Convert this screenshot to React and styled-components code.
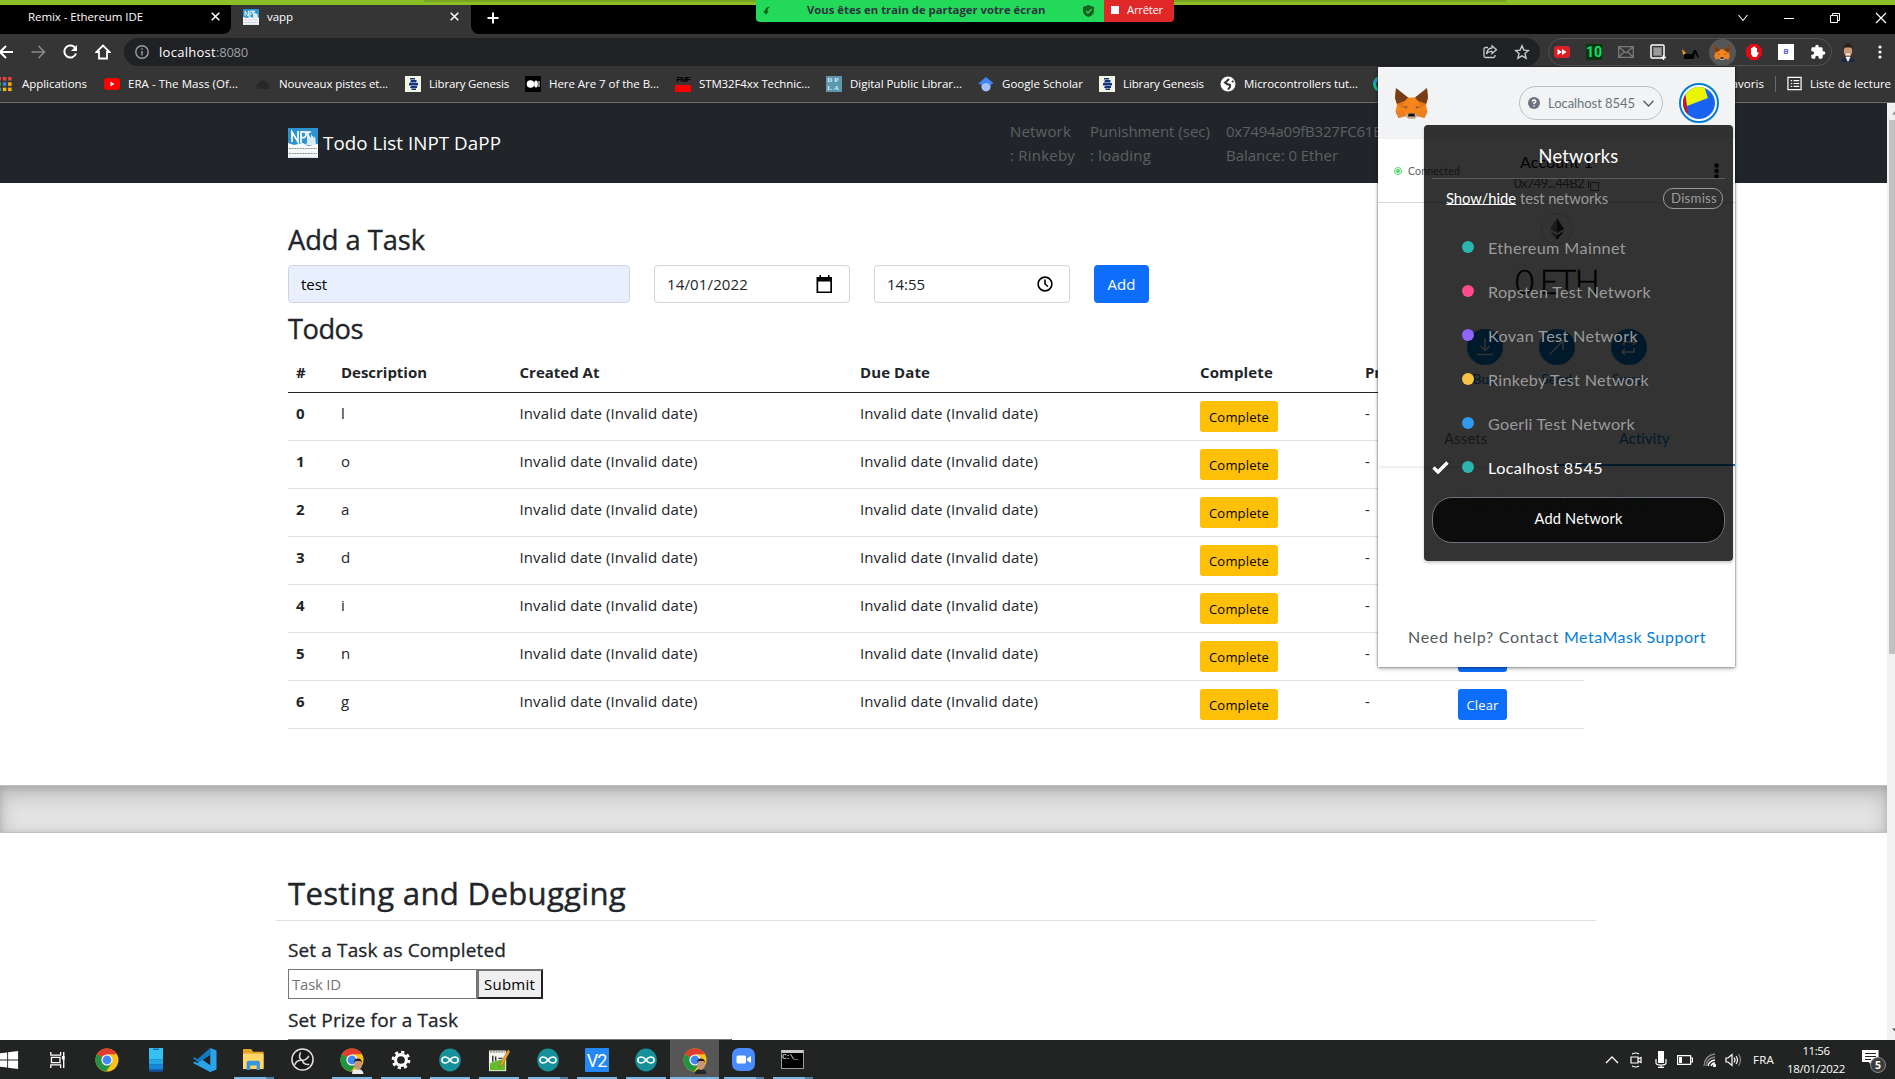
import React, { useLayoutEffect, useRef } from "react";
import styled, { createGlobalStyle } from "styled-components";

const GlobalStyle = createGlobalStyle`
  * { box-sizing: border-box; }
  html, body { margin: 0; padding: 0; overflow: hidden; background: #fff; }
  body { font-family: "Open Sans", "Noto Sans", sans-serif; color: #212529; }
  svg { display: block; flex: none; }
`;

/* ---------- text that keeps a given measure ---------- */
const FitSpan = styled.span`
  display: inline-block;
  white-space: pre;
`;
function Fit({ w, children }) {
  const ref = useRef(null);
  useLayoutEffect(() => {
    const el = ref.current;
    el.style.letterSpacing = "0px";
    const natural = el.getBoundingClientRect().width;
    el.style.letterSpacing = `${(w - natural) / el.textContent.length}px`;
  }, [w, children]);
  return <FitSpan ref={ref}>{children}</FitSpan>;
}

const Screen = styled.div`
  position: relative;
  width: 1895px;
  height: 1079px;
  overflow: hidden;
  display: flex;
  flex-direction: column;
`;

/* ---------- browser chrome ---------- */
const GreenEdge = styled.div`
  flex: none;
  height: 5px;
  background: #8cbf26;
`;
const TabStrip = styled.div`
  flex: none;
  height: 29px;
  display: flex;
  background: #000;
  color: #fff;
  font-size: 11.5px;
`;
const Tab = styled.div`
  width: ${(p) => p.$w}px;
  height: 29px;
  padding: 0 ${(p) => p.$pr}px 6px ${(p) => p.$pl}px;
  display: flex;
  align-items: center;
  gap: 8px;
  background: ${(p) => (p.$active ? "#353535" : "#000")};
  border-radius: ${(p) => (p.$active ? "0" : "0 0 8px 0")};
  & > :last-child { margin-left: auto; }
`;
const TabBacking = styled.div`
  display: flex;
  flex: ${(p) => (p.$grow ? 1 : "none")};
  background: #353535;
`;
const StripRest = styled.div`
  flex: 1;
  display: flex;
  align-items: center;
  justify-content: space-between;
  padding: 0 6px 4px 15px;
  background: #000;
  border-radius: 0 0 0 8px;
`;
const WindowButtons = styled.div`
  display: flex;
  gap: 30px;
  align-items: center;
`;
const Toolbar = styled.div`
  flex: none;
  height: 34px;
  padding: 4px 0 2px 0;
  display: flex;
  align-items: center;
  background: #353535;
`;
const NavButtons = styled.div`
  width: 124px;
  flex: none;
  display: flex;
  gap: 16.5px;
  margin-left: -3px;
  margin-right: 3px;
`;
const Omnibox = styled.div`
  width: 1416px;
  flex: none;
  height: 28px;
  padding: 0 10px;
  display: flex;
  align-items: center;
  gap: 9px;
  border-radius: 14px;
  background: #202124;
  color: #fff;
  font-size: 13px;
`;
const Dim = styled.span`
  color: #9aa0a6;
`;
const OmniActions = styled.div`
  margin-left: auto;
  display: flex;
  gap: 16px;
`;
const Extensions = styled.div`
  width: 284px;
  flex: none;
  height: 28px;
  margin-left: 8px;
  display: flex;
  align-items: center;
  border: 1px solid #505153;
  border-radius: 14px;
  & > :first-child { margin-left: -3px; }
`;
const ExtSlot = styled.div`
  width: 32px;
  height: 27px;
  flex: none;
  display: flex;
  align-items: center;
  justify-content: center;
`;
const ActiveExt = styled.div`
  width: 27px;
  height: 27px;
  flex: none;
  display: grid;
  place-items: center;
  border-radius: 50%;
  background: #555658;
`;
const Digits = styled.div`
  width: 16px;
  height: 16px;
  display: grid;
  place-items: center;
  background: #04350c;
  color: #12e070;
  font: bold 14px/16px "Roboto", sans-serif;
`;
const LetterBox = styled.div`
  width: 16px;
  height: 16px;
  background: #fff;
  color: #5560d8;
  text-align: center;
  font: bold 8px/16px "Roboto", sans-serif;
`;
const Bookmarks = styled.div`
  flex: none;
  height: 35px;
  margin-left: -4px;
  padding: 0 4px 4px 0;
  display: flex;
  align-items: center;
  background: #353535;
  color: #fff;
  font-size: 11.5px;
`;
const Bookmark = styled.div`
  width: ${(p) => p.$w}px;
  flex: none;
  display: flex;
  align-items: center;
  gap: ${(p) => p.$gap || 8}px;
`;
const BookmarkEnd = styled.div`
  margin-left: auto;
  display: flex;
  align-items: center;
`;
const Divider = styled.div`
  width: 1px;
  height: 16px;
  margin: 0 11px 0 11px;
  background: #6a6a6a;
`;
const ChromeLine = styled.div`
  flex: none;
  height: 1px;
  margin-top: -1px;
  background: #6b6c6e;
  position: relative;
`;
const TileIcon = styled.div`
  width: 16px;
  height: 16px;
  display: grid;
  place-items: center;
  overflow: hidden;
  background: ${(p) => p.$bg};
  color: ${(p) => p.$fg};
  font: ${(p) => p.$font || 'bold 7px/8px "Liberation Serif", serif'};
  letter-spacing: ${(p) => p.$ls || 0}px;
  text-align: center;
  white-space: pre;
`;

/* ---------- web page ---------- */
const Viewport = styled.div`
  flex: none;
  height: 937px;
  display: flex;
`;
const Page = styled.div`
  width: 1887px;
  height: 937px;
  overflow: hidden;
  background: #fff;
  font-size: 15px;
`;
const Scrollbar = styled.div`
  width: 8px;
  display: flex;
  flex-direction: column;
  justify-content: space-between;
  background: #f1f1f1;
  overflow: hidden;
`;
const Thumb = styled.div`
  height: 534px;
  margin: -4px 0 auto 2px;
  background: #c1c1c1;
`;
const Navbar = styled.header`
  height: 80px;
  padding: 0 288px;
  display: flex;
  align-items: center;
  background: #212529;
  color: #fff;
`;
const Brand = styled.div`
  width: 722px;
  display: flex;
  align-items: center;
  gap: 5px;
  font-size: 18.8px;
`;
const NavInfo = styled.div`
  width: ${(p) => p.$w}px;
  flex: none;
  color: #5d6063;
  line-height: 24px;
`;
const Container = styled.main`
  height: 602px;
  padding: 40px 303px 0 288px;
`;
const H3 = styled.h3`
  margin: 0;
  height: ${(p) => p.$h}px;
  font-size: 27.3px;
  font-weight: 500;
  line-height: 33px;
  -webkit-text-stroke: 0.35px currentColor;
`;
const FormRow = styled.div`
  display: flex;
  gap: 24px;
  height: 47px;
`;
const Field = styled.div`
  width: ${(p) => p.$w}px;
  height: 38px;
  padding: 0 16px 0 12px;
  display: flex;
  align-items: center;
  justify-content: space-between;
  border: 1px solid #ced4da;
  border-radius: 4px;
  background: ${(p) => (p.$filled ? "#e8f0fe" : "#fff")};
  color: ${(p) => (p.$filled ? "#000" : "#212529")};
`;
const Button = styled.button`
  width: ${(p) => p.$w}px;
  height: ${(p) => (p.$small ? 31 : 38)}px;
  padding: 0;
  border: 0;
  border-radius: ${(p) => (p.$small ? 3 : 4)}px;
  background: ${(p) => (p.$warning ? "#ffc107" : "#0d6efd")};
  color: ${(p) => (p.$warning ? "#000" : "#fff")};
  font-family: inherit;
  font-size: ${(p) => (p.$small ? 13 : 15)}px;
`;
const Row = styled.div`
  display: grid;
  grid-template-columns: 45px 178.5px 340.5px 340px 165px 93px 1fr;
  height: ${(p) => (p.$head ? 41 : 48)}px;
  line-height: 24px;
  border-bottom: 1px solid ${(p) => (p.$head ? "#212529" : "#dee2e6")};
  font-weight: ${(p) => (p.$head ? 700 : 400)};
`;
const Cell = styled.div`
  padding: 8px 0 0 8px;
  font-weight: ${(p) => (p.$bold ? 700 : "inherit")};
`;
const Band = styled.div`
  height: 48px;
  border: solid rgba(0, 0, 0, 0.15);
  border-width: 1px 0;
  background: #e3e3e3;
  box-shadow: inset 0 8px 20px rgba(0, 0, 0, 0.2), inset 0 2px 7px rgba(0, 0, 0, 0.13);
`;
const Debug = styled.section`
  padding: 40px 291px 0 276px;
`;
const H2 = styled.h2`
  margin: 0 0 17px;
  height: 48px;
  padding-left: 12px;
  border-bottom: 1px solid #dee2e6;
  font-size: 31.2px;
  font-weight: 500;
  line-height: 40px;
  -webkit-text-stroke: 0.4px currentColor;
`;
const H5 = styled.h5`
  margin: 0 0 ${(p) => p.$mb}px;
  padding-left: 12px;
  height: 24px;
  font-size: 19px;
  font-weight: 500;
  line-height: 24px;
  -webkit-text-stroke: 0.3px currentColor;
`;
const PlainForm = styled.div`
  display: flex;
  margin: 0 0 9px 12px;
`;
const PlainInput = styled.div`
  width: 189px;
  height: 30px;
  padding: 2px 3px;
  border: 1px solid #767676;
  color: #757575;
  line-height: 24px;
`;
const PlainButton = styled.div`
  width: 66px;
  height: 30px;
  border: 2px solid;
  border-color: #767676 #212121 #212121 #767676;
  background: #efefef;
  color: #000;
  line-height: 26px;
  padding-left: 5px;
`;

/* ---------- wallet popup ---------- */
const Popup = styled.aside`
  position: absolute;
  left: 1378px;
  top: 67px;
  width: 357px;
  height: 600px;
  background: #fff;
  box-shadow: 0 0 2px rgba(0, 0, 0, 0.6), 0 2px 4px rgba(0, 0, 0, 0.25);
  font-family: "Lato", "Inter", sans-serif;
  display: flex;
  flex-direction: column;
`;
const PopHeader = styled.div`
  height: 72px;
  padding: 0 16px 0 17px;
  display: flex;
  align-items: center;
  background: #f2f3f4;
`;
const NetPill = styled.div`
  width: 144px;
  height: 34px;
  margin: 0 16px 0 auto;
  padding: 0 8px;
  display: flex;
  align-items: center;
  gap: 8px;
  border: 1px solid #bbc0c5;
  border-radius: 17px;
  color: #6a737d;
  font-size: 13px;
`;
const AccountBar = styled.div`
  height: 64px;
  padding: 0 16px 0 16px;
  display: grid;
  grid-template-columns: 110px 1fr 110px;
  align-items: center;
  border-bottom: 1px solid #d6d9dc;
  color: #5b6167;
  font-size: 10.5px;
`;
const Connected = styled.div`
  display: flex;
  align-items: center;
  gap: 6px;
`;
const Account = styled.div`
  text-align: center;
  font-size: 13px;
  line-height: 18px;
  white-space: nowrap;
`;
const AccountName = styled.div`
  color: #000;
  font-size: 16px;
  line-height: 25px;
`;
const AccountAddress = styled.div`
  display: flex;
  align-items: center;
  justify-content: center;
  gap: 4px;
  & > svg { margin-top: 4px; }
`;
const MoreButton = styled.div`
  justify-self: end;
`;
const Overview = styled.div`
  height: 263px;
  padding-top: 10px;
  display: flex;
  flex-direction: column;
  align-items: center;
  box-shadow: 0 2px 3px rgba(0, 0, 0, 0.08);
`;
const Token = styled.div`
  width: 32px;
  height: 32px;
  flex: none;
  display: grid;
  place-items: center;
  border: 1px solid #d6d9dc;
  border-radius: 50%;
`;
const Amount = styled.div`
  height: 84px;
  flex: none;
  padding-top: 17px;
  color: #000;
  font-size: 33px;
  font-weight: 300;
  line-height: 38px;
  -webkit-text-stroke: 0.4px currentColor;
`;
const Actions = styled.div`
  display: flex;
  flex: none;
  gap: 12px;
  height: 76px;
`;
const Action = styled.div`
  width: 60px;
  display: flex;
  flex-direction: column;
  align-items: center;
  gap: 5px;
  color: #037dd6;
  font-size: 14px;
`;
const ActionIcon = styled.div`
  width: 36px;
  height: 36px;
  display: grid;
  place-items: center;
  border-radius: 50%;
  background: #037dd6;
`;
const Tabs = styled.div`
  width: 100%;
  height: 61px;
  display: flex;
`;
const PopTab = styled.div`
  flex: 1;
  padding: 25px 3px 0 0;
  text-align: center;
  font-size: 14.5px;
  line-height: 18px;
  color: ${(p) => (p.$on ? "#037dd6" : "#6a737d")};
  border-bottom: ${(p) => (p.$on ? "2px solid #037dd6" : "0")};
`;
const Empty = styled.div`
  padding-top: 23px;
  text-align: center;
  font-size: 15px;
  line-height: 22px;
  color: #c2c6ca;
`;
const Help = styled.div`
  margin-top: auto;
  height: 41px;
  padding-left: 30px;
  font-size: 16px;
  line-height: 22px;
  color: #535a61;
  white-space: nowrap;
`;
const Link = styled.span`
  color: #037dd6;
`;
const Dropdown = styled.div`
  position: absolute;
  left: 46px;
  top: 58px;
  width: 309px;
  height: 436px;
  padding: 0 8px;
  border-radius: 4px;
  background: rgba(0, 0, 0, 0.8);
  box-shadow: 0 2px 3px rgba(0, 0, 0, 0.2);
  color: #fff;
`;
const DropTitle = styled.div`
  height: 54px;
  padding-top: 19px;
  border-bottom: 1px solid #5b5b5b;
  text-align: center;
  font-size: 18.3px;
  line-height: 24px;
`;
const DropHint = styled.div`
  height: 46px;
  padding: 8px 2px 0 14px;
  display: flex;
  align-items: flex-start;
  justify-content: space-between;
  color: #9b9b9b;
  font-size: 14.8px;
  line-height: 22px;
`;
const ShowHide = styled.span`
  display: inline-block;
  height: 18px;
  margin-right: 4px;
  border-bottom: 1px solid #fff;
  color: #fff;
`;
const Dismiss = styled.div`
  width: 60px;
  height: 21px;
  margin-top: 1px;
  padding-left: 7px;
  border: 1px solid #9b9b9b;
  border-radius: 10px;
  font-size: 13.2px;
  line-height: 19px;
`;
const NetItem = styled.div`
  height: 44px;
  display: flex;
  align-items: center;
  color: ${(p) => (p.$on ? "#fff" : "#9b9b9b")};
  font-size: 16.2px;
`;
const Check = styled.div`
  width: 30px;
`;
const Dot = styled.div`
  width: 12px;
  height: 12px;
  margin-right: 14px;
  border-radius: 50%;
  background: ${(p) => p.$c};
`;
const AddNetwork = styled.div`
  width: 293px;
  height: 46px;
  margin-top: 8px;
  border: 1px solid #6a737d;
  border-radius: 20px;
  background: rgba(0, 0, 0, 0.75);
  text-align: center;
  font-size: 14.6px;
  line-height: 41px;
`;

/* ---------- screen share banner ---------- */
const ShareShade = styled.div`
  position: absolute;
  left: 424px;
  top: 0;
  width: 1082px;
  height: 2px;
  background: rgba(0, 0, 0, 0.14);
`;
const ShareBar = styled.div`
  position: absolute;
  left: 756px;
  top: 0;
  height: 22px;
  display: flex;
  border-radius: 0 0 4px 4px;
  overflow: hidden;
  font-size: 11.3px;
  font-weight: 700;
  line-height: 20px;
`;
const Sharing = styled.div`
  width: 348px;
  padding: 0 10px 0 7px;
  display: grid;
  grid-template-columns: 44px 236px 1fr;
  align-items: center;
  background: #23d959;
  color: #2c3440;
  & > span { margin-top: -2px; }
  & > :last-child { justify-self: end; }
`;
const Stop = styled.div`
  width: 70px;
  padding: 0 0 3px 7px;
  display: flex;
  align-items: center;
  gap: 8px;
  background: #e02828;
  color: #fff;
  font-weight: 400;
`;
const StopSquare = styled.div`
  width: 8px;
  height: 8px;
  background: #fff;
`;

/* ---------- taskbar ---------- */
const Taskbar = styled.footer`
  flex: none;
  height: 39px;
  padding-right: 9px;
  display: flex;
  justify-content: space-between;
  background: #222423;
  color: #fff;
`;
const Apps = styled.div`
  display: flex;
  margin-left: -16px;
`;
const AppSlot = styled.div`
  width: 49px;
  height: 39px;
  padding-top: 3px;
  display: flex;
  flex-direction: column;
  align-items: center;
  justify-content: space-between;
  background: ${(p) => (p.$active ? "#555655" : "transparent")};
`;
const IconBox = styled.div`
  height: 33px;
  display: grid;
  place-items: center;
`;
const Run = styled.div`
  width: ${(p) => (p.$active ? 49 : 40)}px;
  height: 2px;
  background: ${(p) => (p.$run ? "#76b9ed" : "transparent")};
  border-right: ${(p) => (p.$run === 2 ? "8px solid #4f7ea3" : "0")};
`;
const VncTile = styled.div`
  width: 24px;
  height: 24px;
  background: #2489f5;
  border-radius: 1px;
  color: #fff;
  text-align: center;
  font: 18px/25px "Roboto", sans-serif;
  letter-spacing: -1px;
`;
const Console = styled.div`
  width: 23px;
  height: 19px;
  border: 1px solid #9a9a9a;
  border-top: 3px solid #c9c9c9;
  background: #000;
  color: #fff;
  font: 8px/8px "Liberation Mono", monospace;
  letter-spacing: -1px;
`;
const Tray = styled.div`
  display: flex;
  align-items: center;
  font-size: 11.5px;
`;
const TrayIcon = styled.div`
  width: 24.4px;
  display: grid;
  place-items: center;
`;
const Lang = styled.div`
  margin-left: 7px;
  width: 34px;
`;
const Clock = styled.div`
  width: 58px;
  margin-right: 17px;
  text-align: center;
  line-height: 18px;
`;
const Notify = styled.div`
  position: relative;
  width: 24px;
  height: 24px;
`;
const Badge = styled.div`
  position: absolute;
  left: 8px;
  top: 9px;
  width: 16px;
  height: 16px;
  border: 1px solid #8b8b8b;
  border-radius: 50%;
  background: #3b3c3b;
  text-align: center;
  font-size: 10.5px;
  font-weight: 700;
  line-height: 14px;
`;

/* ---------- drawings ---------- */
const Line = ({ s = 16, c = "#fff", w = 1.5, vb = "0 0 16 16", h, children }) => (
  <svg width={s} height={h || s} viewBox={vb} fill="none" stroke={c} strokeWidth={w}>
    {children}
  </svg>
);
const Fox = ({ w = 33, h = 31 }) => (
  <svg width={w} height={h} viewBox="0 0 33 31" preserveAspectRatio="none">
    <path d="M1 1 13 9.5h7L32 1l1 9-2 7 1.500 6.500L29.500 30l-7-2-3 2.500h-6L10.500 28l-7 2L.5 23.500 2 17 0 10z" fill="#f6851b" />
    <path d="M1 0 13 9.500 10 13 2 16 0 10zM32 0 20 9.500 23 13l8 3 2-6z" fill="#763d16" />
    <path d="M2 16l8-3-2.500 7zM31 16l-8-3 2.500 7z" fill="#e4761b" />
    <path d="M7.500 19l5-1.500-.5 3.500zM25.500 19l-5-1.500.5 3.500z" fill="#a5623c" />
    <path d="M.5 23.500 8 22l3 6-7.500 2zM32.500 23.500 25 22l-3 6 7.500 2z" fill="#e97f24" />
    <path d="M10.500 28l3-3h6l3 3-3 2.800h-6z" fill="#c0ad9e" />
    <path d="M13.500 25.500h6l.5 3h-7z" fill="#161616" />
  </svg>
);
const Inpt = ({ s }) => (
  <svg width={s} height={s} viewBox="0 0 30 30">
    <rect width="30" height="30" fill="#f4f9fc" />
    <rect width="30" height="18" fill="#2c93cf" />
    <path d="M4 14V4l6 10V3M13 15V4q6-1 5 3t-5 2M17 4h6M20 4v11" stroke="#fff" strokeWidth="1.700" fill="none" />
    <path d="M21 7l2 3v-4l3 4 1-2 1 9H18z" fill="#d9edf7" />
    <path d="M0 15l6 2 9-2 5 3 10-2v4H0z" fill="#fff" />
    <path d="M1 20.500h28M1 25.500h28" stroke="#8f9499" strokeWidth="1" strokeDasharray="2 .7" />
    <path d="M1 29.300h28" stroke="#c5dbe8" />
  </svg>
);
const Chrome = ({ face }) => (
  <svg width="24" height="28" viewBox="0 0 24 28">
    <circle cx="12" cy="14" r="11.500" fill="#fbc116" />
    <path d="M12 14 2 8.200A11.500 11.500 0 0 1 22 8.300H12z" fill="#e33b2e" />
    <path d="M2 8.200A11.500 11.500 0 0 0 11 25.400L17 17l-5-3z" fill="#229342" />
    <circle cx="12" cy="14" r="5.600" fill="#fff" />
    <circle cx="12" cy="14" r="4.400" fill="#4285f4" />
    {face && (
      <g>
        <path d="M12 28q0-5 5.500-5t6 5z" fill={face === 1 ? "#eee" : "#24262c"} />
        <ellipse cx="18" cy="19" rx="3.800" ry="5" fill="#c99577" />
        <path d="M14 17q0-4.500 4-4.500t4 4.500l-1.500-2h-5z" fill="#241a16" />
      </g>
    )}
  </svg>
);
const Arduino = () => (
  <svg width="22" height="24" viewBox="0 0 23 28" preserveAspectRatio="none">
    <ellipse cx="11.500" cy="14" rx="11.300" ry="13.300" fill="#179199" />
    <path d="M11.500 14c-2-3-3.500-3.500-5-3.500a3.500 3.500 0 0 0 0 7c1.500 0 3-.5 5-3.500s3.500-3.500 5-3.500a3.500 3.500 0 0 1 0 7c-1.500 0-3-.5-5-3.500z" fill="none" stroke="#fff" strokeWidth="1.700" />
  </svg>
);
const LibGen = () => (
  <svg width="16" height="16" viewBox="0 0 16 16">
    <rect width="16" height="16" fill="#f3f3e2" />
    <path d="M5 2h5v1.500H5zM6 4h5.500v2.500H5zM4 7h9v2.500H4zM6 10h6v2H5zM6 12.500h5V14H7z" fill="#15357f" />
  </svg>
);
const Cal = () => (
  <svg width="17" height="19" viewBox="0 0 17 19">
    <path d="M3.500 0h1.500v2h7V0h1.500v2H16v16H.5V2h3zM2.200 6.500v10h12.100v-10z" fill="#000" fillRule="evenodd" />
  </svg>
);
const Close = () => <Line s={9} vb="0 0 9 9"><path d="M.7.7l7.600 7.600M8.300.7.7 8.300" /></Line>;

const bookmarks = [
  [108, "Applications", 65, (
    <svg width="16" height="16" viewBox="0 0 16 16">
      {["#e8453c", "#e8453c", "#e8453c", "#30a552", "#3f80f0", "#f9b10d", "#30a552", "#f9b10d", "#f9b10d"].map((c, i) => (
        <rect key={i} x={1.5 + (i % 3) * 5.3} y={1 + Math.floor(i / 3) * 5.3} width="3.500" height="3.500" fill={c} />
      ))}
    </svg>
  ), 10],
  [151, "ERA - The Mass (Of...", 110, (
    <svg width="16" height="16" viewBox="0 0 16 16"><rect y="2" width="16" height="12" rx="3" fill="#f00" /><path d="M6.500 5.500v5l4-2.500z" fill="#fff" /></svg>
  )],
  [150, "Nouveaux pistes et...", 109, (
    <svg width="16" height="16" viewBox="0 0 16 16"><path d="M3 13a3 3 0 0 1 0-5 5 5 0 0 1 9-1 3.500 3.500 0 0 1 1 6z" fill="#282828" /></svg>
  )],
  [120, "Library Genesis", 80, <LibGen />],
  [150, "Here Are 7 of the B...", 110, (
    <svg width="16" height="16" viewBox="0 0 16 16"><rect width="16" height="16" fill="#000" /><circle cx="5.500" cy="8" r="3.800" fill="#fff" /><ellipse cx="11" cy="8" rx="1.800" ry="3.600" fill="#fff" /><rect x="13.500" y="5" width="1" height="6" fill="#fff" /></svg>
  )],
  [151, "STM32F4xx Technic...", 111, <TileIcon $bg="linear-gradient(#3a3535 56%, #f00 56%)" $fg="#000" $font='bold 8px/8px "Liberation Sans", sans-serif' $ls={-1}>{"FMF\n "}</TileIcon>],
  [152, "Digital Public Librar...", 112, <TileIcon $bg="#5c98b0" $fg="#d9edf3" $ls={2}>{"DP\nLA"}</TileIcon>],
  [121, "Google Scholar", 81, (
    <svg width="16" height="16" viewBox="0 0 16 16"><circle cx="8" cy="10.800" r="4.600" fill="#a0c3ff" /><path d="M8 1 .5 7.200 3.500 9q4.500-4 9 0l3-1.800z" fill="#4285f4" /></svg>
  )],
  [121, "Library Genesis", 81, <LibGen />],
  [153, "Microcontrollers tut...", 114, (
    <svg width="16" height="16" viewBox="0 0 16 16"><circle cx="8" cy="8" r="7.500" fill="#fff" /><path d="M9 3 7 5 5 6.500 7 8l3 1v2l-2 2.500M12 5l1.500 1" stroke="#333" strokeWidth="2" fill="none" /></svg>
  )],
  [20, "", 0, (
    <svg width="16" height="16" viewBox="0 0 16 16"><circle cx="8" cy="8" r="6.500" fill="none" stroke="#00c28c" strokeWidth="3" /><path d="M2 7a6 6 0 0 1 6-5" fill="none" stroke="#2f8ae0" strokeWidth="3" /></svg>
  )],
];

const networks = [
  ["Ethereum Mainnet", 138, "#29b6af"],
  ["Ropsten Test Network", 163, "#ff4a8d"],
  ["Kovan Test Network", 150, "#9064ff"],
  ["Rinkeby Test Network", 161, "#f6c343"],
  ["Goerli Test Network", 147, "#3099f2"],
  ["Localhost 8545", 115, "#29b6af"],
];

const Gear = () => (
  <svg width="20" height="22" viewBox="0 0 22 22">
    <circle cx="11" cy="11" r="6" fill="none" stroke="#fff" strokeWidth="3.500" />
    <circle cx="11" cy="11" r="8.800" fill="none" stroke="#fff" strokeWidth="3" strokeDasharray="3.450 3.450" />
  </svg>
);

const taskApps = [
  [<svg width="20" height="18" viewBox="0 0 22 22" preserveAspectRatio="none"><path d="M0 3l9-1.300v8.800H0zM10 1.600 21 0v10.500H10zM0 11.500h9v8.800L0 19zM10 11.500h11V22l-11-1.600z" fill="#fff" /></svg>],
  [<Line s={17} h={16} vb="0 0 17 18"><path d="M1 0v3.500h11V0M1 18v-3.500h11V18M1.700 6h9.600v6H1.700zM15.500 0v18" /><path d="M13.500 6.500h3" strokeWidth="4" /></Line>],
  [<Chrome />],
  [<svg width="14" height="24" viewBox="0 0 14 29" preserveAspectRatio="none"><rect width="14" height="29" rx="1" fill="#124c8f" /><rect width="14" height="14" fill="#35c1f1" /><rect y="14" width="14" height="6" fill="#23a5e6" /><rect y="20" width="14" height="6" fill="#1486d8" /><path d="M4 1.500h6" stroke="#0b4b7c" /></svg>],
  [<svg width="24" height="24" viewBox="0 0 25 28" preserveAspectRatio="none"><path d="M18 0 4.500 13 1.500 10.500 0 12l17.500 16H18z" fill="#0e7cc5" /><path d="M18 0l6.500 3v22L18 28 0 17.500 1.500 16l3.500 1.500L18 8z" fill="#2aa3ea" /><path d="M18 8v12l-8-6z" fill="#222423" /></svg>],
  [<svg width="23" height="21" viewBox="0 0 23 23"><path d="M0 0h9l2 3H22.500v18H0z" fill="#e0a526" /><path d="M0 5h22.500v17H0z" fill="#ffd767" /><path d="M4 23v-8q0-2 2-2h10.500q2 0 2 2v8H15v-5H8v5z" fill="#3d93d9" /></svg>, 2],
  [<Line s={23} h={23} vb="0 0 24 24" c="#ddd" w={1.6}><circle cx="12" cy="12" r="11" fill="#17181a" /><path d="M10 4.500q-3 6 2 8.500 5-1 6.500-5M12 13q-6-1-8 4.500M12 13q1 5 7 4" /></Line>],
  [<Chrome face={1} />, 1],
  [<Gear />, 1],
  [<Arduino />, 1],
  [<svg width="22" height="24" viewBox="0 0 23 28" preserveAspectRatio="none"><path d="M1 3h18v24H1z" fill="#f3f5ec" /><path d="M2 18q9-5 16-4v12H2z" fill="#63bb2d" /><path d="M2 4h16" stroke="#999" strokeWidth="3" strokeDasharray="2 1" /><path d="M5 9v7M8 10v5M11 12h4" stroke="#333" strokeWidth="1.500" /><path d="M21 2 13 18l-1 4 3-2 8-16z" fill="#f0a92a" stroke="#935b18" strokeWidth=".6" /></svg>, 1],
  [<Arduino />, 2],
  [<VncTile>V2</VncTile>, 1],
  [<Arduino />, 1],
  [<Chrome face={2} />, 1, true],
  [<svg width="23" height="23" viewBox="0 0 23 23"><rect width="23" height="23" rx="7" fill="#4a8cff" /><rect x="4.500" y="7.500" width="9.500" height="8" rx="1.500" fill="#fff" /><path d="M15 10.500l4-2.500v7l-4-2.500z" fill="#fff" /></svg>, 2],
  [<Console>C:\_</Console>, 2],
];

export default function App() {
  return (
    <Screen>
      <GlobalStyle />
      <GreenEdge />
      <TabStrip>
        <TabBacking>
          <Tab $w={231} $pl={28} $pr={11}>
            <Fit w={115}>Remix - Ethereum IDE</Fit>
            <Close />
          </Tab>
        </TabBacking>
        <Tab $w={240} $pl={12} $pr={12} $active>
          <Inpt s={16} />
          <Fit w={26}>vapp</Fit>
          <Close />
        </Tab>
        <TabBacking $grow>
          <StripRest>
            <Line s={14} w={2} vb="0 0 14 14"><path d="M7 1.500v11M1.500 7h11" /></Line>
            <WindowButtons>
              <Line w={1.1}><path d="M3.500 5 8 10.500 12.500 5" /></Line>
              <Line w={1}><path d="M3 8.500h10" /></Line>
              <Line w={1}><path d="M3.500 5.500h7v7h-7zM5.500 5.500v-2h7v7h-2" /></Line>
              <Line w={1.200}><path d="M3 3l10 10M13 3 3 13" /></Line>
            </WindowButtons>
          </StripRest>
        </TabBacking>
      </TabStrip>
      <Toolbar>
        <NavButtons>
          <Line w={2}><path d="M16 8H3M9 2 3 8l6 6" /></Line>
          <Line w={1.600} c="#87898b"><path d="M1.500 8H14.500M8.500 2l6 6-6 6" /></Line>
          <Line w={2}><path d="M13.500 4.500A6 6 0 1 0 14 9.500" /><path d="M15 1v6H9z" fill="#fff" stroke="none" /></Line>
          <Line w={1.800}><path d="M8 1.500 1.500 8H4v6.500h8V8h2.500z" /></Line>
        </NavButtons>
        <Omnibox>
          <Line c="#9aa0a6" w={1.400}><circle cx="8" cy="8" r="6.200" /><path d="M8 7v4.500M8 4.200v1.500" /></Line>
          <span><Fit w={57}>localhost</Fit><Dim><Fit w={32}>:8080</Fit></Dim></span>
          <OmniActions>
            <Line c="#c8c9ca" w={1.300}><path d="M6 3.500H3.500q-1.500 0-1.500 1.500v7q0 1.500 1.500 1.500h8q1.500 0 1.500-1.500V11M10 1.800 14.500 5.700 10 9.600V7.500Q6.500 7 4.500 10 5 4.500 10 4z" /></Line>
            <Line c="#c8c9ca" w={1.400}><path d="M8 1.800l1.900 4.300 4.600.4L11 9.600l1.100 4.600L8 11.800l-4.100 2.400L5 9.600 1.500 6.500l4.600-.4z" /></Line>
          </OmniActions>
        </Omnibox>
        <Extensions>
          <ExtSlot>
            <svg width="16" height="16" viewBox="0 0 16 16"><rect y="2" width="16" height="12" rx="3" fill="#d92027" /><path d="M3.500 5v6l4.500-3zM8 5v6l4.500-3z" fill="#fff" /></svg>
          </ExtSlot>
          <ExtSlot><Digits>10</Digits></ExtSlot>
          <ExtSlot><Line c="#797979" w={1.300}><path d="M.7 2.700h14.600v10.600H.7zM1 3l7 6 7-6M1 13l5-5M15 13l-5-5" /></Line></ExtSlot>
          <ExtSlot><Line c="#fff" w={1.500}><rect x="1" y="1" width="13" height="13" rx="1" /><rect x="3.500" y="3.500" width="8" height="8" fill="#9a9a9a" stroke="#777" strokeWidth="1" /><path d="M13.500 11v5M11 13.500h5" /></Line></ExtSlot>
          <ExtSlot><svg width="18" height="16" viewBox="0 0 18 16"><path d="M3 10h8l2-4h2l3 7-1 1-3-5-1 6H3z" fill="#050505" /><path d="M1 5l4 4-3 2z" fill="#f59a23" /></svg></ExtSlot>
          <ExtSlot><ActiveExt><Fox w={16} h={15} /></ActiveExt></ExtSlot>
          <ExtSlot>
            <svg width="16" height="16" viewBox="0 0 16 16"><path d="M4.700 0h6.600L16 4.700v6.600L11.300 16H4.700L0 11.300V4.700z" fill="#e00b12" /><path d="M5 8V4h1.500V3H8v-.500h1.500V4H11v5l1-1 .800.800L10.500 13H7L5 10z" fill="#fff" /></svg>
          </ExtSlot>
          <ExtSlot><LetterBox>B</LetterBox></ExtSlot>
          <ExtSlot>
            <svg width="16" height="16" viewBox="0 0 24 24"><path d="M20.500 11H19V7a2 2 0 0 0-2-2h-4V3.500a2.500 2.500 0 0 0-5 0V5H4a2 2 0 0 0-2 2v3.800h1.500a2.700 2.700 0 0 1 0 5.400H2V20a2 2 0 0 0 2 2h3.800v-1.500a2.700 2.700 0 0 1 5.400 0V22H17a2 2 0 0 0 2-2v-4h1.500a2.500 2.500 0 0 0 0-5z" fill="#fff" /></svg>
          </ExtSlot>
        </Extensions>
        <ExtSlot>
          <svg width="16" height="20" viewBox="0 0 16 20"><path d="M1 20q0-5 7-5t7 5z" fill="#1e2b45" /><path d="M5.500 15h5L8 20z" fill="#fff" /><ellipse cx="8" cy="9" rx="4.200" ry="6" fill="#cb997c" /><path d="M3.500 8Q3 1.500 8 1.500T12.500 8L11.500 5.500h-7z" fill="#2b1d18" /><path d="M6 11q2 1.500 4 0v1.500q-2 1-4 0z" fill="#fff" /></svg>
        </ExtSlot>
        <ExtSlot>
          <svg width="4" height="16" viewBox="0 0 4 16" fill="#fff"><circle cx="2" cy="3" r="1.600" /><circle cx="2" cy="8" r="1.600" /><circle cx="2" cy="13" r="1.600" /></svg>
        </ExtSlot>
      </Toolbar>
      <Bookmarks>
        {bookmarks.map(([w, label, tw, icon, gap], i) => (
          <Bookmark key={i} $w={w} $gap={gap}>
            {icon}
            {label && <Fit w={tw}>{label}</Fit>}
          </Bookmark>
        ))}
        <BookmarkEnd>
          <Fit w={75}>Autres favoris</Fit>
          <Divider />
          <Line s={15} w={1.300}><path d="M1 1.500h14v13H1zM4 5h1.500M7 5h6M4 8h1.500M7 8h6M4 11h1.500M7 11h6" /></Line>
          <Bookmark $w={8} />
          <Fit w={81}>Liste de lecture</Fit>
        </BookmarkEnd>
      </Bookmarks>
      <ChromeLine />
      <Viewport>
        <Page>
          <Navbar>
            <Brand><Inpt s={30} /><Fit w={178}>Todo List INPT DaPP</Fit></Brand>
            <NavInfo $w={80}><Fit w={61}>Network</Fit><br /><Fit w={65}>: Rinkeby</Fit></NavInfo>
            <NavInfo $w={136}><Fit w={120}>Punishment (sec)</Fit><br /><Fit w={61}>: loading</Fit></NavInfo>
            <NavInfo $w={160}><Fit w={165}>0x7494a09fB327FC61B8</Fit><br /><Fit w={112}>Balance: 0 Ether</Fit></NavInfo>
          </Navbar>
          <Container>
            <H3 $h={42}><Fit w={137}>Add a Task</Fit></H3>
            <FormRow>
              <Field $w={342} $filled><Fit w={26}>test</Fit></Field>
              <Field $w={196}><Fit w={81}>14/01/2022</Fit><Cal /></Field>
              <Field $w={196}>
                <Fit w={38}>14:55</Fit>
                <Line s={16} c="#000" w={1.600}><circle cx="8" cy="8" r="6.900" /><path d="M8 3.500V8l3 2.500" /></Line>
              </Field>
              <Button $w={55}>Add</Button>
            </FormRow>
            <H3 $h={40}><Fit w={75}>Todos</Fit></H3>
            <Row $head>
              <Cell>#</Cell>
              <Cell><Fit w={86}>Description</Fit></Cell>
              <Cell><Fit w={80}>Created At</Fit></Cell>
              <Cell><Fit w={70}>Due Date</Fit></Cell>
              <Cell><Fit w={73}>Complete</Fit></Cell>
              <Cell><Fit w={36}>Prize</Fit></Cell>
              <Cell><Fit w={38}>Clear</Fit></Cell>
            </Row>
            {["l", "o", "a", "d", "i", "n", "g"].map((ch, i) => (
              <Row key={ch}>
                <Cell $bold>{i}</Cell>
                <Cell>{ch}</Cell>
                <Cell><Fit w={178}>Invalid date (Invalid date)</Fit></Cell>
                <Cell><Fit w={178}>Invalid date (Invalid date)</Fit></Cell>
                <Cell><Button $small $warning $w={78}><Fit w={60}>Complete</Fit></Button></Cell>
                <Cell>-</Cell>
                <Cell><Button $small $w={49}><Fit w={32}>Clear</Fit></Button></Cell>
              </Row>
            ))}
          </Container>
          <Band />
          <Debug>
            <H2><Fit w={338}>Testing and Debugging</Fit></H2>
            <H5 $mb={7}><Fit w={218}>Set a Task as Completed</Fit></H5>
            <PlainForm>
              <PlainInput><Fit w={49}>Task ID</Fit></PlainInput>
              <PlainButton><Fit w={51}>Submit</Fit></PlainButton>
            </PlainForm>
            <H5 $mb={7}><Fit w={170}>Set Prize for a Task</Fit></H5>
            <PlainForm>
              <PlainInput />
              <PlainInput />
              <PlainButton />
            </PlainForm>
          </Debug>
        </Page>
        <Scrollbar>
          <svg width="8" height="21" viewBox="0 0 8 21"><path d="M5 11.500 9 7v4.500z" fill="#8a8a8a" /></svg>
          <Thumb />
          <svg width="8" height="17" viewBox="0 0 8 17"><path d="M5 5.500h4V9.500z" fill="#505050" /></svg>
        </Scrollbar>
      </Viewport>
      <Taskbar>
        <Apps>
          {taskApps.map(([icon, run, active], i) => (
            <AppSlot key={i} $active={active}>
              <IconBox>{icon}</IconBox>
              <Run $run={run} $active={active} />
            </AppSlot>
          ))}
        </Apps>
        <Tray>
          <TrayIcon><Line s={14} w={1.300} vb="0 0 14 14"><path d="M1 10l6-6 6 6" /></Line></TrayIcon>
          <TrayIcon><Line s={12} h={16} vb="0 0 12 16" w={1.200}><path d="M1 5h7v6H1zM8 7l3-1.500v5L8 9M2 2q4-2 7 0M2 14q4 2 7 0" /></Line></TrayIcon>
          <TrayIcon><Line s={12} h={17} vb="0 0 12 17" w={1.200}><rect x="3" y="0" width="6" height="12" fill="#fff" stroke="none" /><path d="M1 8v4q0 2 5 2t5-2V8M6 14v3M3 16.300h6" /></Line></TrayIcon>
          <TrayIcon><Line s={16} h={10} vb="0 0 16 10" w={1.200}><path d="M.6.6h13v8.800H.6zM14 3h1.500v4H14" /><path d="M2 2h3v6H2z" fill="#fff" stroke="none" /></Line></TrayIcon>
          <TrayIcon><Line s={13} h={14} vb="0 0 13 14" w={1.300}><path d="M5 13q1-5 7-6M8 13q1-3 4-3" /><path d="M1 13Q2 2 12 1M3 13Q4 5 12 4" stroke="#8a8a8a" /><circle cx="11.500" cy="12.500" r="1" fill="#fff" /></Line></TrayIcon>
          <TrayIcon><Line s={17} h={14} vb="0 0 17 14" w={1.200}><path d="M1 5h2l4-3.500v11L3 9H1zM9 4.500q2 2.500 0 5M11 3q3 4 0 8" /><path d="M13.500 1q4 6 0 12" stroke="#888" /></Line></TrayIcon>
          <Lang><Fit w={21}>FRA</Fit></Lang>
          <Clock><Fit w={27}>11:56</Fit><Fit w={58}>18/01/2022</Fit></Clock>
          <Notify>
            <svg width="17" height="18" viewBox="0 0 17 18"><path d="M0 2h16.500v12H10v3.500L6.500 14H0z" fill="#fff" /><path d="M3 5.500h11M3 8.500h11M3 11.500h6" stroke="#222423" strokeWidth="1.200" /></svg>
            <Badge>5</Badge>
          </Notify>
        </Tray>
      </Taskbar>

      <Popup>
        <PopHeader>
          <Fox />
          <NetPill>
            <svg width="12" height="12" viewBox="0 0 12 12"><circle cx="6" cy="6" r="6" fill="#6a737d" /><path d="M4.200 4.500Q4.300 3 6 3t1.800 1.500Q7.800 5.500 6 6.300v.7M6 8.200v1.300" stroke="#fff" strokeWidth="1.500" fill="none" /></svg>
            <Fit w={87}>Localhost 8545</Fit>
            <Line s={11} h={7} vb="0 0 11 7" c="#535a61" w={1.300}><path d="M.5.7l5 5.300 5-5.300" /></Line>
          </NetPill>
          <svg width="40" height="40" viewBox="0 0 40 40">
            <defs><clipPath id="jazz"><circle cx="20" cy="20" r="16" /></clipPath></defs>
            <circle cx="20" cy="20" r="19" fill="#fff" stroke="#037dd6" strokeWidth="2" />
            <g clipPath="url(#jazz)">
              <rect width="40" height="40" fill="#1863f2" />
              <path d="M0 0h5l5 40H0z" fill="#c8142b" />
              <path d="M5 0h19l5 15L8 23z" fill="#eaf500" />
            </g>
          </svg>
        </PopHeader>
        <AccountBar>
          <Connected>
            <svg width="8" height="8" viewBox="0 0 8 8"><circle cx="4" cy="4" r="3.500" fill="none" stroke="#4cd964" /><circle cx="4" cy="4" r="2" fill="#4cd964" /></svg>
            <Fit w={52}>Connected</Fit>
          </Connected>
          <Account>
            <AccountName><Fit w={73}>Account 1</Fit></AccountName>
            <AccountAddress>
              <Fit w={70}>0x749...44B2</Fit>
              <Line s={11} h={11} vb="0 0 11 11" c="#5b6167" w={1}><path d="M.5 8V.5M2.500 2.500h8v8h-8z" /></Line>
            </AccountAddress>
          </Account>
          <MoreButton>
            <svg width="5" height="16" viewBox="0 0 5 16"><circle cx="2.500" cy="2.500" r="2.300" /><circle cx="2.500" cy="8" r="2.300" /><circle cx="2.500" cy="13.500" r="2.300" /></svg>
          </MoreButton>
        </AccountBar>
        <Overview>
          <Token>
            <svg width="14" height="22" viewBox="0 0 14 22"><path d="M7 0 0 11l7 4z" fill="#8a8a8a" /><path d="M7 0l7 11-7 4z" fill="#343434" /><path d="M0 13l7 9v-5z" fill="#777" /><path d="M14 13l-7 9v-5z" fill="#222" /></svg>
          </Token>
          <Amount><Fit w={83}>0 ETH</Fit></Amount>
          <Actions>
            <Action><ActionIcon><Line s={18} vb="0 0 18 18"><path d="M9 0v12M4.500 8 9 12.500 13.500 8M1 16.500h16" /></Line></ActionIcon>Buy</Action>
            <Action><ActionIcon><Line s={18} vb="0 0 18 18"><path d="M2 16 15 3M6 3h9v9" /></Line></ActionIcon>Send</Action>
            <Action><ActionIcon><Line s={18} vb="0 0 18 18"><path d="M4 8V4h12M13 1l3 3-3 3M14 10v4H2M5 11l-3 3 3 3" /></Line></ActionIcon>Swap</Action>
          </Actions>
          <Tabs>
            <PopTab><Fit w={43}>Assets</Fit></PopTab>
            <PopTab $on><Fit w={51}>Activity</Fit></PopTab>
          </Tabs>
        </Overview>
        <Empty><Fit w={189}>You have no transactions</Fit></Empty>
        <Help><Fit w={156}>Need help? Contact </Fit><Link><Fit w={142}>MetaMask Support</Fit></Link></Help>
        <Dropdown>
          <DropTitle><Fit w={80}>Networks</Fit></DropTitle>
          <DropHint>
            <span><ShowHide><Fit w={70}>Show/hide</Fit></ShowHide><Fit w={88}>test networks</Fit></span>
            <Dismiss><Fit w={46}>Dismiss</Fit></Dismiss>
          </DropHint>
          {networks.map(([name, w, c], i) => (
            <NetItem key={name} $on={i === 5}>
              <Check>
                {i === 5 && <Line s={17} h={13} vb="0 0 17 13" w={3.4}><path d="M1.500 6.500 6 11 15.500 1.500" /></Line>}
              </Check>
              <Dot $c={c} />
              <Fit w={w}>{name}</Fit>
            </NetItem>
          ))}
          <AddNetwork><Fit w={88}>Add Network</Fit></AddNetwork>
        </Dropdown>
      </Popup>

      <ShareShade />
      <ShareBar>
        <Sharing>
          <svg width="8" height="10" viewBox="0 0 11 12"><path d="M10 0Q3 0 2.500 6H0l4 5 4-5H6Q6 2 10 0z" fill="#17601f" /></svg>
          <Fit w={236}>Vous êtes en train de partager votre écran</Fit>
          <svg width="11" height="12" viewBox="0 0 11 12"><path d="M5.500 0 11 2v4q0 4-5.500 6Q0 10 0 6V2z" fill="#17601f" /><path d="M3 6l2 2 3.500-4" stroke="#23d959" strokeWidth="1.300" fill="none" /></svg>
        </Sharing>
        <Stop><StopSquare /><Fit w={36}>Arrêter</Fit></Stop>
      </ShareBar>
    </Screen>
  );
}
